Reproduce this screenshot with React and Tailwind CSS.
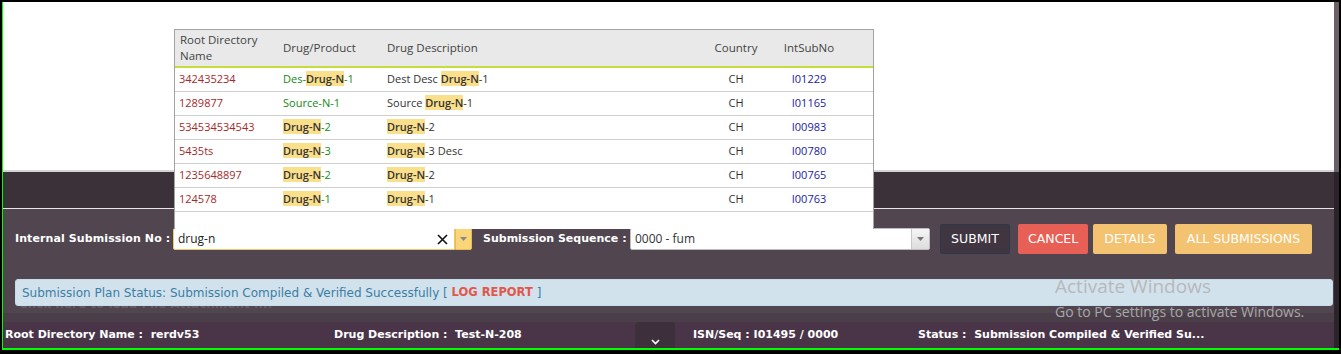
import React from "react";

const rows = [
  { root: "342435234", drug: ["Des-", "Drug-N", "-1"], desc: ["Dest Desc ", "Drug-N", "-1"], country: "CH", isn: "I01229" },
  { root: "1289877", drug: ["Source-N-1", "", ""], desc: ["Source ", "Drug-N", "-1"], country: "CH", isn: "I01165" },
  { root: "534534534543", drug: ["", "Drug-N", "-2"], desc: ["", "Drug-N", "-2"], country: "CH", isn: "I00983" },
  { root: "5435ts", drug: ["", "Drug-N", "-3"], desc: ["", "Drug-N", "-3 Desc"], country: "CH", isn: "I00780" },
  { root: "1235648897", drug: ["", "Drug-N", "-2"], desc: ["", "Drug-N", "-2"], country: "CH", isn: "I00765" },
  { root: "124578", drug: ["", "Drug-N", "-1"], desc: ["", "Drug-N", "-1"], country: "CH", isn: "I00763" },
];

function Hl({ parts, color }) {
  return (
    <span className={color}>
      {parts[0]}
      {parts[1] && <span className="bg-[#fbe08c] font-semibold text-[#333]">{parts[1]}</span>}
      {parts[2]}
    </span>
  );
}

function Lookup() {
  return (
    <div className="absolute left-[171px] top-[27px] w-[700px] h-[200px] bg-white border border-[#a3a3a3] border-b-0 font-['Open_Sans',sans-serif] z-10">
      {/* header */}
      <div className="grid grid-cols-[108px_104px_316px_66px_80px_1fr] h-[38px] bg-[#e9e9e9] border-b-2 border-[#c6dc3c] text-[11.5px] leading-[16px] text-[#444] items-center">
        <div className="pl-[5px]">Root Directory<br />Name</div>
        <div>Drug/Product</div>
        <div>Drug Description</div>
        <div className="text-center">Country</div>
        <div className="text-center">IntSubNo</div>
        <div></div>
      </div>
      {rows.map((r) => (
        <div
          key={r.isn}
          className="grid grid-cols-[108px_104px_316px_66px_80px_1fr] h-[24px] border-b border-[#cfcfcf] text-[11px] items-center"
        >
          <div className="pl-[4px] text-[#a52a2a]">{r.root}</div>
          <div><Hl parts={r.drug} color="text-[#138a13]" /></div>
          <div><Hl parts={r.desc} color="text-[#333]" /></div>
          <div className="text-center text-[#333]">{r.country}</div>
          <div className="text-center text-[#1c1c9c]">{r.isn}</div>
          <div></div>
        </div>
      ))}
    </div>
  );
}

function Btn({ children, className }) {
  return (
    <button className={"h-[30px] px-[10px] rounded-[2px] text-white text-[12.5px] font-['DejaVu_Sans',sans-serif] " + className}>
      {children}
    </button>
  );
}

export default function App() {
  return (
    <div className="w-[1341px] h-[354px] bg-black pt-[2px] pl-[2px] pr-[2px] pb-[4px] overflow-hidden">
      <div className="relative h-full flex border-l border-b-2 border-[#00ff00]">
        <div className="flex-1 flex flex-col">
          {/* white page area */}
          <div className="h-[170px] bg-white border-b-2 border-[#d6d3d6]"></div>
          {/* dark band */}
          <div className="h-[37px] bg-[#3a3139] border-b border-[#e8e4e8]"></div>

          {/* form panel */}
          <div className="h-[113px] bg-[#51464f] flex flex-col font-['DejaVu_Sans',sans-serif]">
            <div className="flex items-center h-[30px] mt-[15px] pl-[12px]">
              <span className="text-white text-[11px] font-bold tracking-[0.1px] w-[158px]">Internal Submission No :</span>
              <div className="flex h-[22px] w-[299px]">
                <div className="flex-1 bg-white border border-[#efc86a] rounded-l-[2px] flex items-center pl-[4px] pr-[6px] font-['Open_Sans',sans-serif] text-[12px] text-[#222]">
                  <span className="flex-1">drug-n</span>
                  <svg width="11" height="11" viewBox="0 0 11 11"><path d="M1 1L10 10M10 1L1 10" stroke="#111" strokeWidth="1.6" /></svg>
                </div>
                <div className="w-[17px] bg-[#fad67a] border border-[#e8bb55] rounded-r-[2px] flex items-center justify-center">
                  <svg width="7" height="4" viewBox="0 0 7 4"><path d="M0 0H7L3.5 4Z" fill="#888" /></svg>
                </div>
              </div>
              <span className="text-white text-[11px] font-bold ml-[11px] w-[147px]">Submission Sequence :</span>
              <div className="flex h-[22px] w-[300px] bg-white border border-[#bdbdbd] rounded-[2px]">
                <span className="flex-1 flex items-center pl-[4px] font-['Open_Sans',sans-serif] text-[12px] text-[#333]">0000 - fum</span>
                <div className="w-[18px] border-l border-[#c8c8c8] bg-gradient-to-b from-[#f6f6f6] to-[#dcdcdc] flex items-center justify-center">
                  <svg width="7" height="4" viewBox="0 0 7 4"><path d="M0 0H7L3.5 4Z" fill="#777" /></svg>
                </div>
              </div>
              <div className="flex gap-[8px] ml-[10px]">
                <Btn className="w-[70px] bg-[#3f3641] border border-[#2e3848]">SUBMIT</Btn>
                <Btn className="w-[70px] bg-[#e85f56] -mr-[3px]">CANCEL</Btn>
                <Btn className="w-[74px] bg-[#f3c372]">DETAILS</Btn>
                <Btn className="w-[137px] bg-[#f3c372]">ALL SUBMISSIONS</Btn>
              </div>
            </div>

            <div className="relative mt-[25px] ml-[12px] mr-[1px]">
              <div className="relative z-[1] h-[27px] bg-[#d9ebf5]/95 border border-[#c4dceb] rounded-[3px] flex items-center pl-[6px] text-[12px] text-[#3a7ea4]">
                Submission Plan Status: Submission Compiled &amp; Verified Successfully [&nbsp;
                <span className="text-[#e2574c] font-bold text-[11.5px]">LOG REPORT</span>
                &nbsp;]
              </div>
              <div className="absolute left-[4px] top-[16px] text-[12px] font-bold text-white/15">Click here to load File Attachment ....</div>
            </div>
            <div className="flex-1 mt-[7px] bg-[#4a3f48]"></div>
          </div>

          {/* bottom summary bar */}
          <div className="flex-1 bg-[#4a3548] flex items-end font-['DejaVu_Sans',sans-serif] text-[11px] font-bold text-white">
            <div className="w-[331px] pl-[2px] pb-[5px]">Root Directory Name :&nbsp; rerdv53</div>
            <div className="w-[301px] pb-[5px]">Drug Description :&nbsp; Test-N-208</div>
            <div className="w-[40px] h-[26px] bg-[#3d2f3b] rounded-t-[4px] flex items-end justify-center pb-[3px]">
              <svg width="9" height="6" viewBox="0 0 9 6"><path d="M1 1L4.5 4.5L8 1" stroke="#fff" strokeWidth="1.6" fill="none" /></svg>
            </div>
            <div className="w-[243px] pl-[18px] pb-[5px]">ISN/Seq : I01495 / 0000</div>
            <div className="pb-[5px]">Status :&nbsp; Submission Compiled &amp; Verified Su...</div>
          </div>
        </div>
        {/* right scroll strip */}
        <div className="w-[5px] flex flex-col">
          <div className="h-[170px] bg-[#6b5f68]"></div>
          <div className="flex-1 bg-[#2c242b]"></div>
        </div>

        <Lookup />

        {/* windows watermark */}
        <div className="absolute left-[1052px] top-[271px] font-['Open_Sans',sans-serif] text-[#b8b8b8] pointer-events-none z-20">
          <div className="text-[19px] leading-[26px]">Activate Windows</div>
          <div className="text-[14px] leading-[20px] mt-[3px] text-[#a8a8a8]">Go to PC settings to activate Windows.</div>
        </div>
      </div>
    </div>
  );
}
